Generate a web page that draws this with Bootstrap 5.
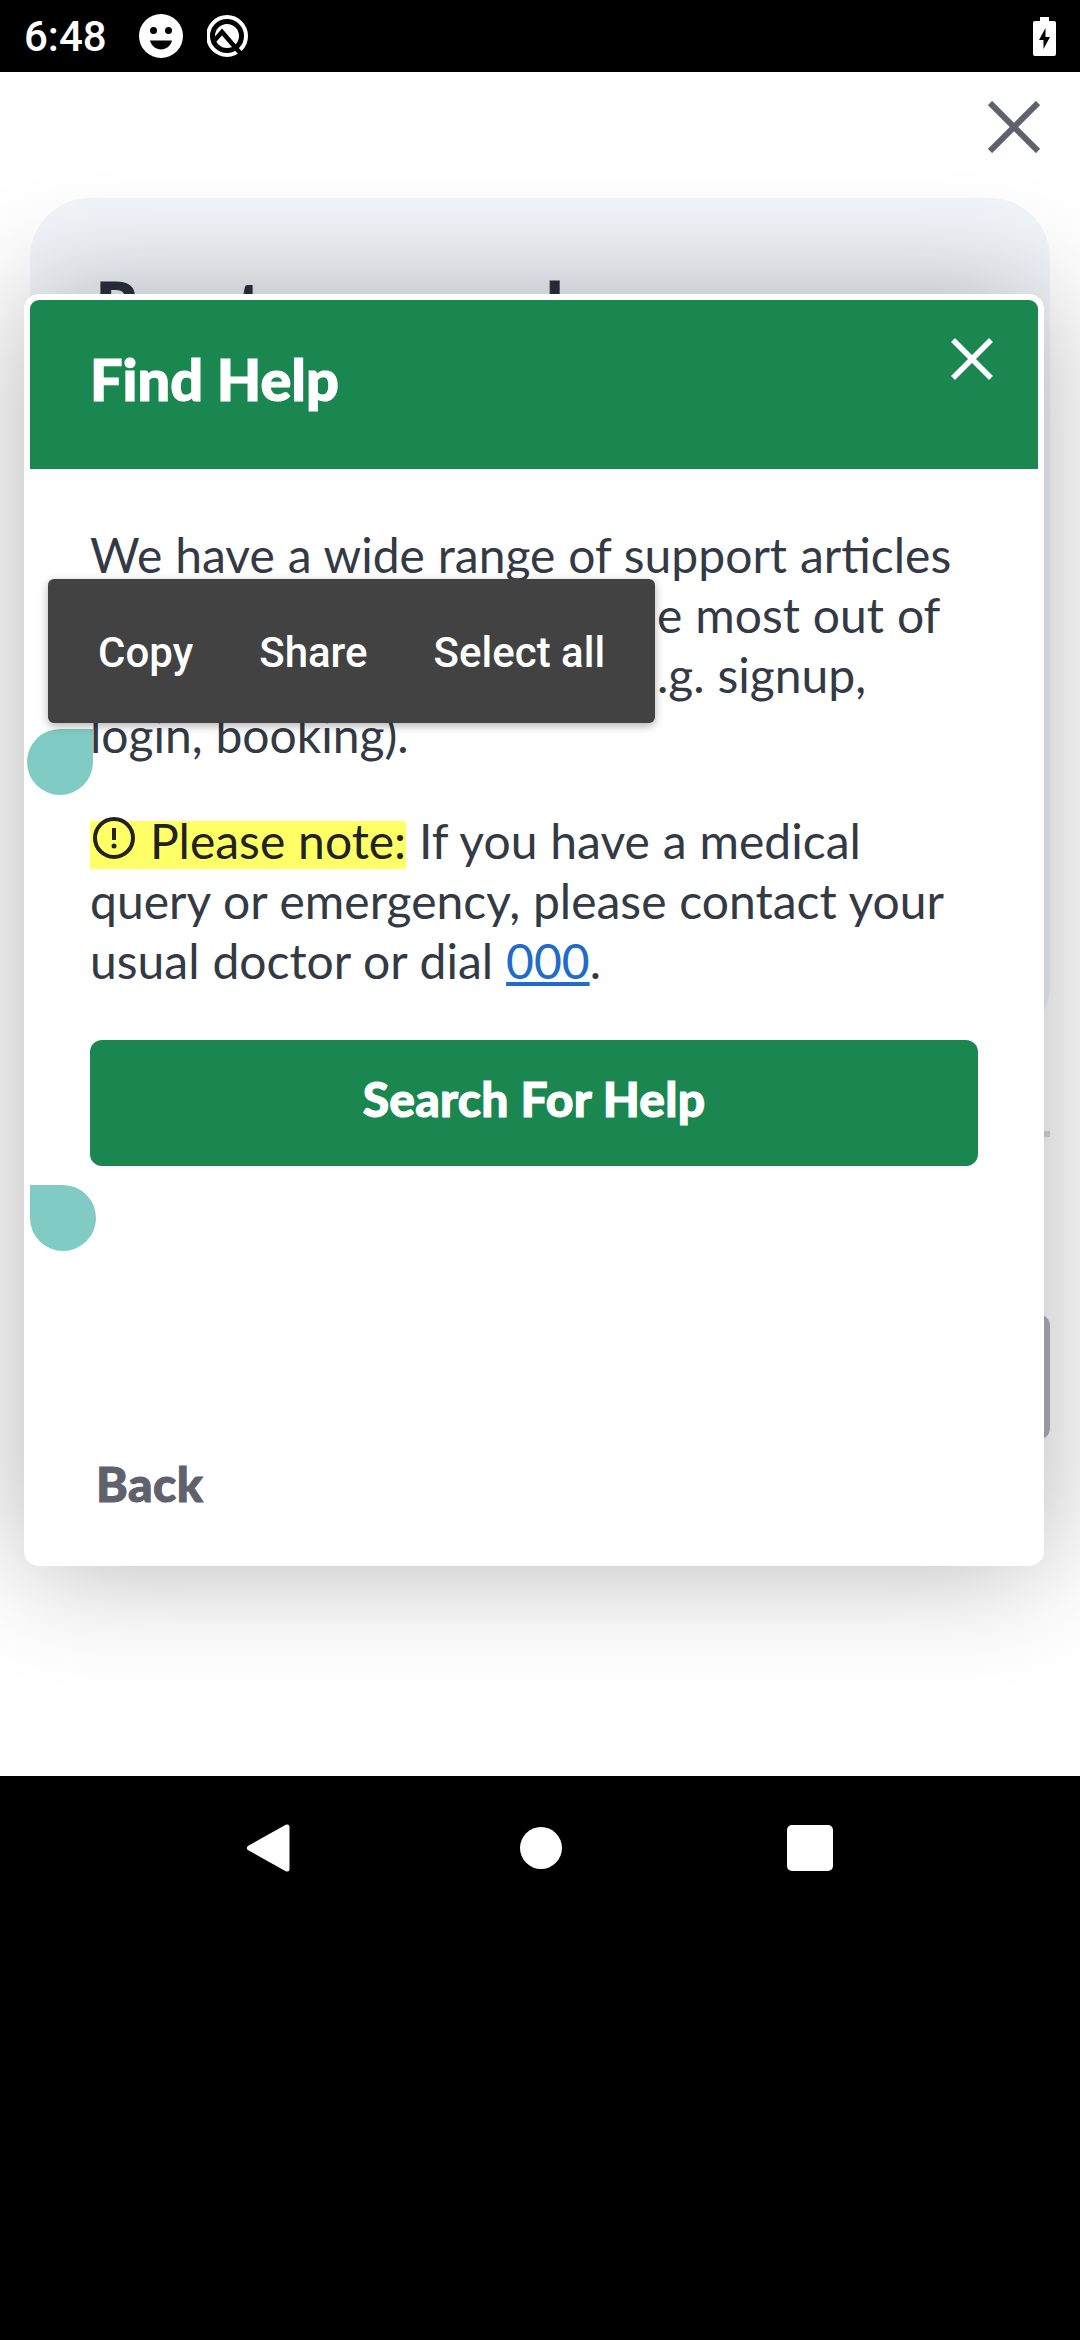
<!DOCTYPE html>
<html lang="en">
<head>
<meta charset="utf-8">
<meta name="viewport" content="width=device-width, initial-scale=1">
<title>Find Help</title>
<link href="https://cdn.jsdelivr.net/npm/bootstrap@5.3.0/dist/css/bootstrap.min.css" rel="stylesheet">
<style>
  body { width: 1080px; height: 2340px; overflow: hidden; background: #000; font-family: Lato, sans-serif; color: #333a45; font-size: 48px; line-height: 60px; }
  svg { display: block; flex: none; }
  .status-bar { height: 72px; padding: 0 24px; background: #000; color: #fff; font: 500 42px/72px Roboto, sans-serif; }
  .clock { width: 115px; padding-top: 2px; }
  .app-view { height: 1704px; background: #fff; }
  .page-top { height: 126px; padding: 29px 40px 0 0; }
  .page-panel { margin: 0 30px; height: 847px; border-radius: 60px; background: #f2f6fb; padding: 74px 66px; }
  .page-title { font-size: 65px; line-height: 64px; font-weight: 900; letter-spacing: .8px; color: #2c313f; margin: 0; -webkit-text-stroke: 1px #2c313f; }
  .page-rule { margin: 86px 30px 177px; height: 6px; background: #d8d8d8; }
  .page-button { margin: 0 30px; height: 126px; border-radius: 12px; background: #b1b1b9; }
  .help-dialog { left: 24px; top: 222px; width: 1020px; height: 1272px; padding: 6px; border-radius: 15px; background: #fff; box-shadow: 0 0 120px rgba(0,0,0,.3); }
  .help-head { height: 169px; background: #1a8751; color: #fff; border-radius: 9px 9px 0 0; padding: 38px 45px 0 60px; }
  .help-head h1 { font-size: 57.6px; line-height: 82px; font-weight: 900; margin: 0; -webkit-text-stroke: 1.2px #fff; }
  .help-body { padding: 56px 60px 0; word-spacing: .6px; text-rendering: optimizeLegibility; }
  .help-body p { margin: 0 0 46px; white-space: nowrap; }
  .help-body p + p { margin-bottom: 49px; }
  .joined { font-variant-ligatures: discretionary-ligatures; }
  .covered { display: inline-block; width: 567px; }
  .note-mark { background: linear-gradient(#ff6, #ff6) 0 9px / 100% 48px no-repeat; color: #222; padding: 0; font-size: inherit; }
  .note-mark svg { display: inline-block; vertical-align: 0; margin: 0 2px 0 3px; }
  .dial { color: #216bc9; text-decoration-thickness: 4px; text-underline-offset: 3px; }
  .btn-search { height: 126px; border-radius: 12px; background: #1a8751; color: #fff; font-size: 48px; line-height: 60px; font-weight: 900; letter-spacing: .25px; border: 0; padding: 0 0 8px; -webkit-text-stroke: 1px #fff; }
  .btn-back { margin: 288px 0 0 61px; color: #5f626d; font-size: 48px; line-height: 60px; font-weight: 900; letter-spacing: .5px; padding: 0 5px; border: 0; -webkit-text-stroke: 1px #5f626d; }
  .text-menu { left: 48px; top: 507px; width: 607px; height: 144px; padding-left: 50px; border-radius: 6px; background: #424242; color: #fff; font: 500 42px/147px Roboto, sans-serif; box-shadow: 0 3px 10px rgba(0,0,0,.3); gap: 66px; white-space: nowrap; }
  .handle { width: 66px; height: 66px; background: #80cbc4; }
  .handle-start { left: 27px; top: 657px; border-radius: 33px 0 33px 33px; }
  .handle-end { left: 30px; top: 1113px; border-radius: 0 33px 33px 33px; }
  .nav-keys { height: 144px; padding: 0 135px; }
</style>
</head>
<body>
<header class="status-bar d-flex align-items-center">
  <span class="clock">6:48</span>
  <svg width="44" height="44" viewBox="0 0 44 44"><circle cx="22" cy="22" r="22" fill="#fff"/><circle cx="14.5" cy="16.500" r="3.5"/><circle cx="29.500" cy="16.500" r="3.500"/><path d="M11 26.500h22c-1 5-6 9-11 9s-10-4-11-9z"/></svg>
  <svg class="ms-4" width="42" height="44" viewBox="2 0 42 44"><circle cx="22" cy="22" r="19" fill="none" stroke="#fff" stroke-width="4"/><circle cx="22" cy="22" r="12" fill="#fff"/><path d="M9 27l8-9 19 22" fill="none" stroke="#000" stroke-width="4.500"/></svg>
  <svg class="ms-auto" width="23" height="40" viewBox="0 0 23 40"><path d="M7 1h9v4h5q2 0 2 2v31q0 2-2 2H2q-2 0-2-2V7q0-2 2-2h5z" fill="#fff"/><path d="M12.500 12L6 24h4.500v9L17 21h-4.500z"/></svg>
</header>

<main class="app-view position-relative overflow-hidden">
  <div class="page-top d-flex justify-content-end">
    <svg width="52" height="52" viewBox="0 0 52 52"><path d="M2 2l48 48M50 2L2 50" stroke="#5f626d" stroke-width="6"/></svg>
  </div>
  <section class="page-panel"><h2 class="page-title">Reset password</h2></section>
  <div class="page-rule"></div>
  <div class="page-button"></div>

  <section class="help-dialog position-absolute">
    <div class="help-head d-flex justify-content-between align-items-start">
      <h1>Find Help</h1>
      <svg width="42" height="42" viewBox="0 0 42 42"><path d="M2 2l38 38M40 2L2 40" stroke="#fff" stroke-width="5.500"/></svg>
    </div>
    <div class="help-body">
      <p>We have a wide range of support <span class="joined">articles</span><br><span class="covered"></span>e most out of<br><span class="covered"></span>.g. signup,<br>login, booking).</p>
      <p><mark class="note-mark"><svg width="42" height="42" viewBox="0 0 42 42"><circle cx="21" cy="21" r="19" fill="none" stroke="#222" stroke-width="4"/><path d="M21 11v12" stroke="#222" stroke-width="4"/><circle cx="21" cy="29" r="2.500" fill="#222"/></svg> Please note:</mark> If you have a medical<br>query or emergency, please contact your<br>usual doctor or dial <a class="dial" href="#">000</a>.</p>
      <button class="btn btn-search w-100" type="button">Search For Help</button>
    </div>
    <button class="btn btn-back" type="button">Back</button>
  </section>

  <div class="handle handle-start position-absolute"></div>
  <div class="handle handle-end position-absolute"></div>
  <div class="text-menu position-absolute d-flex"><span>Copy</span><span>Share</span><span>Select all</span></div>
</main>

<nav class="nav-keys d-flex justify-content-around align-items-center">
  <svg width="48" height="48" viewBox="3 0 48 48"><path d="M5.500 24L43 3V45z" fill="#fff" stroke="#fff" stroke-width="5" stroke-linejoin="round"/></svg>
  <svg width="42" height="42" viewBox="0 0 42 42"><circle cx="21" cy="21" r="21" fill="#fff"/></svg>
  <svg width="46" height="46" viewBox="0 0 46 46"><rect width="46" height="46" rx="5" fill="#fff"/></svg>
</nav>
<script src="https://cdn.jsdelivr.net/npm/bootstrap@5.3.0/dist/js/bootstrap.bundle.min.js"></script>
</body>
</html>
